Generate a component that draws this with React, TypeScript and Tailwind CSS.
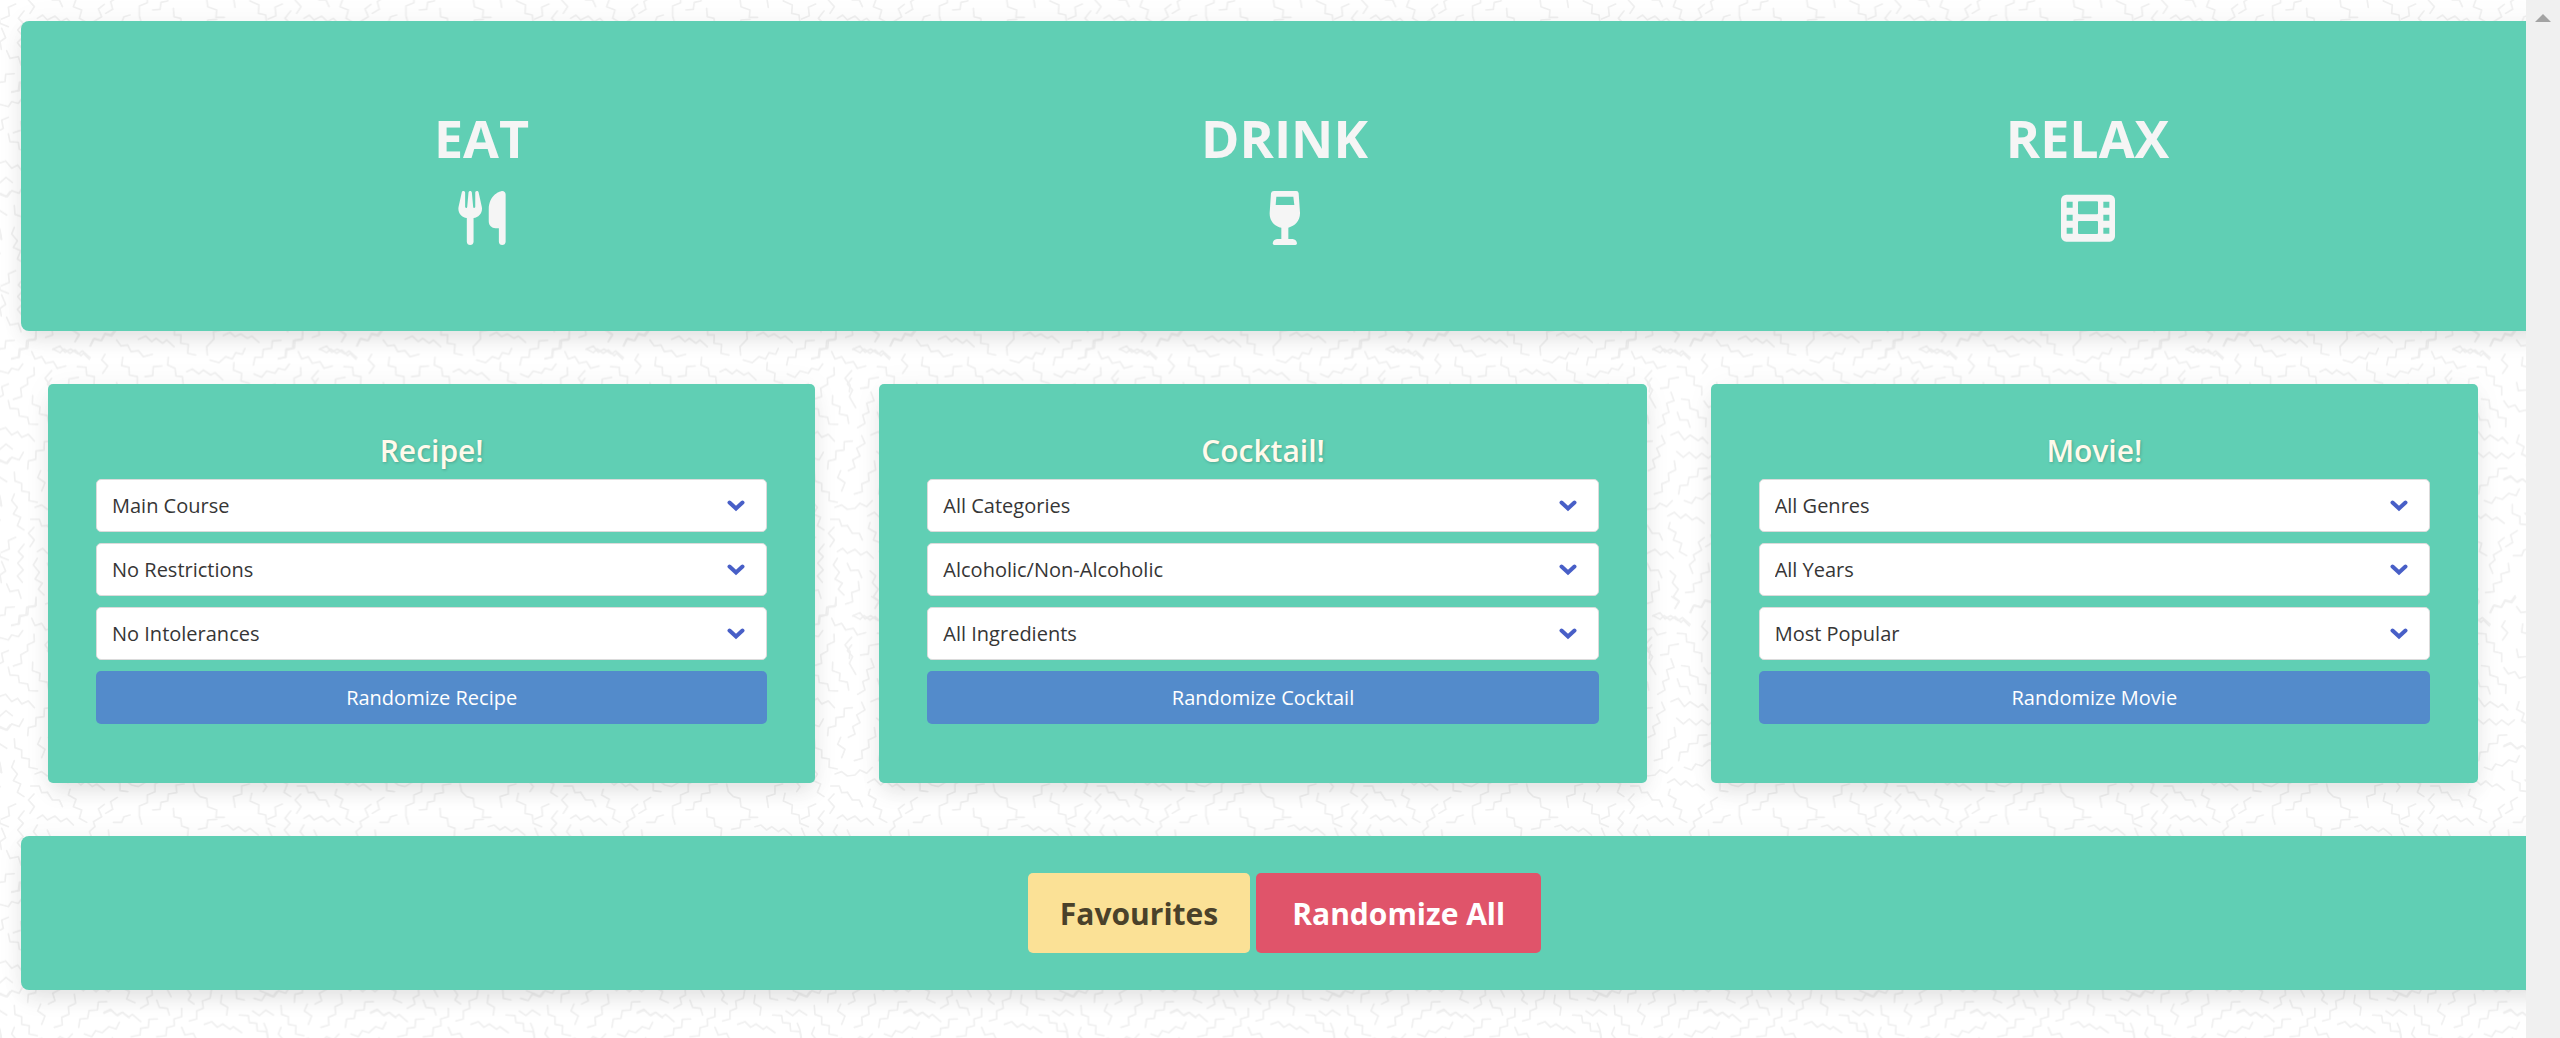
import type { ReactNode } from "react";
import { FaUtensils } from "react-icons/fa6";

// Zigzag strokes of the wallpaper tile (800 x 800 units, drawn at one third).
const LEFT_STROKES = [
  "25,12 5,20 10,45 -8,55",
  "25,62 30,85 55,87 58,108 83,112 87,132 113,133",
  "98,47 97,72 120,80 118,102 142,107 146,130",
  "-22,158 -3,150 17,143 35,165 53,155 65,172 85,163 103,183",
  "157,183 133,185 132,210 108,213 107,238 85,243 83,267",
  "-20,222 0,208 18,192 37,207",
  "-20,232 0,240 22,250 35,232 57,240 70,217",
  "43,277 45,303 65,310 65,333 88,337 87,362 112,367",
  "122,272 113,293 135,308 125,333",
  "43,342 35,362 52,382 40,402 62,412 52,437 72,450",
  "-8,330 0,350 5,378",
  "92,418 118,418 125,438 143,437",
  "102,442 85,460 103,480 90,500",
  "47,472 25,482 28,507 5,517",
  "72,493 55,515 70,530 53,550 70,570 52,588 67,607",
  "112,535 100,555 118,577 105,597 127,610 115,628 132,645",
  "5,545 17,573 0,585 4,608",
  "20,612 30,635 55,630 63,655",
  "108,652 108,677 85,680 83,705 60,710 58,732 35,735",
];

const MIDDLE_STROKES = [
  "93,37 102,62 80,70 87,97 68,105 75,130 53,143",
  "35,-5 22,12 38,30 28,50 47,83",
  "112,97 120,120 143,120 150,142",
  "125,57 147,60 150,85 173,92 175,112 198,115 197,140",
  "93,165 115,155 133,180 150,165 175,182 187,172 203,190",
  "110,215 130,232 148,217 168,235 185,220 205,235 223,220",
  "65,167 75,190 50,205 60,228 38,240 45,262 25,272",
  "103,243 107,270 85,280 87,303 65,312 67,335 43,342",
  "200,265 175,266 172,290 147,292 143,315 120,317 116,342",
  "133,362 155,370 167,352 187,358 207,340 228,347 238,327",
  "-15,382 5,375 22,388 45,385 60,370 80,380 97,362",
  "83,408 103,397 122,415 137,403 157,420 170,412 193,430",
  "90,428 85,445 108,458 100,480 125,490 118,515 140,527",
  "193,473 175,487 185,510 160,525 165,540 148,555 158,580",
  "232,452 212,465 218,488 197,500",
  "22,437 37,460 58,460 67,480",
  "-8,515 8,505 22,520 45,508 62,525 80,515 100,535",
  "22,550 32,572 55,570 65,593",
  "55,605 58,630 35,638 38,665 17,672",
  "205,550 208,575 183,582 185,605 160,612 162,635 137,638",
  "90,573 107,588 97,608 115,628 100,650 117,663 105,685",
  "150,698 160,677 183,682 195,660 213,665 225,648",
  "38,708 60,698 75,717 92,707 115,722 127,713 150,733",
];

const RIGHT_STROKES = [
  "612,303 625,322 645,315 658,335 678,330 692,350",
  "657,405 650,428 672,440 665,463 688,473",
  "612,540 633,530 652,547 668,537 688,553",
  "637,613 637,640 660,650 660,672 683,675",
  "640,767 665,767 672,750 690,745",
];

const UPPER_STROKES = [
  "35,177 55,172 58,147 78,145 80,122 105,120 108,97",
  "160,147 180,158 192,147 210,160 225,150 243,167 250,160 268,178",
  "215,90 238,105 225,125",
  "272,138 283,115 305,122 315,103 335,108 347,92",
  "350,120 363,138 383,135 393,155 415,152 430,170 457,163",
  "415,118 437,108 455,125 468,115 488,130 500,120 522,140",
  "500,80 523,82 523,105 543,105 542,130 565,133 563,160 587,165",
  "663,90 640,95 642,117 620,140 622,165",
  "670,107 690,97 705,110 722,102 742,115 755,108 777,127",
  "735,145 727,163 707,158 697,177 677,170 657,188 630,180",
  "760,195 765,172 787,172 790,148 815,145 817,123 843,121",
  "95,155 105,177 125,170 137,190 160,185 172,205 197,198",
  "315,163 305,180 323,198 308,220",
  "368,172 365,197 387,202 388,225 412,230 412,255",
  "505,172 503,195 525,205 528,228 547,230 550,255",
  "485,198 460,200 458,227 435,230",
  "232,200 258,202 260,226 283,230 282,255 305,260 305,285",
  "235,232 207,237 205,262 182,265",
  "560,215 577,207 597,222 610,210 632,225 645,218 668,240",
  "702,188 700,210 725,220 723,243 748,250",
  "762,222 785,232 800,213 825,220 835,205 855,210 868,192",
  "102,203 103,225 82,235 83,253 62,265 65,290 40,298",
  "155,212 135,235 150,255 148,275",
  "350,248 355,272 378,270",
];

const LOWER_STROKES = [
  "312,277 332,268 350,285 367,277 385,292 397,283 422,305",
  "365,200 388,215 380,237 405,248",
  "455,205 457,225 440,233 445,252 422,265",
  "470,240 478,262 502,265 508,285",
  "500,205 513,230",
  "560,205 573,225 565,240 582,252",
  "635,205 630,235 607,243 610,265 590,273 590,297 568,303",
  "545,265 545,290 522,297 523,317 500,323 498,347 470,350",
  "472,297 447,298 445,322 422,325 420,345 393,350",
  "545,322 555,345 580,340 590,360",
  "613,313 635,305 652,322 668,312 690,328 700,320 725,338",
  "665,225 662,250 683,262 680,285",
  "708,205 710,235 733,240",
  "762,235 785,242 797,222 818,230 830,215",
  "758,273 778,287 797,270 820,285",
  "718,285 745,287 748,308 770,310 772,333 800,335 803,357",
];

const CREST_STROKES = [
  "-5,900 15,915 35,920 60,905",
  "107,900 85,912 85,935 62,945 62,968 38,978 38,1008 45,1032",
  "172,912 148,915 150,938 125,942 123,963 103,967 100,988 78,990",
  "200,912 205,935 220,950 240,955 243,980 270,990 268,1012 293,1012",
  "325,982 320,950 345,942 345,918 368,912",
  "375,940 370,963 397,975 395,1000 417,1005 420,1030 445,1040",
  "405,900 420,920 410,935",
  "140,985 142,1010 162,1015 165,1038 185,1045 183,1068",
  "215,1048 240,1043 243,1020 270,1018",
  "285,1040 303,1035 320,1050 335,1040 355,1055 370,1045 395,1065",
];

function Strokes({ points }: { points: string[] }) {
  return (
    <>
      {points.map((p) => (
        <polyline key={p} points={p} />
      ))}
    </>
  );
}

function Wallpaper() {
  return (
    <svg aria-hidden="true" className="pointer-events-none absolute inset-0 -z-10 size-full">
      <defs>
        <g
          id="zigzags"
          fill="none"
          stroke="#f0f0f0"
          strokeWidth="5"
          strokeLinecap="round"
          strokeLinejoin="round"
        >
          <g transform="translate(0 340)">
            <Strokes points={LEFT_STROKES} />
          </g>
          <g transform="translate(120 340)">
            <Strokes points={MIDDLE_STROKES} />
          </g>
          <g transform="translate(-300 100)">
            <Strokes points={RIGHT_STROKES} />
          </g>
          <g transform="translate(0 100)">
            <Strokes points={UPPER_STROKES} />
          </g>
          <g transform="translate(0 360)">
            <Strokes points={LOWER_STROKES} />
          </g>
          <g transform="translate(380 -160)">
            <Strokes points={CREST_STROKES} />
          </g>
        </g>
        <pattern
          id="zigzag-tile"
          width="800"
          height="800"
          patternUnits="userSpaceOnUse"
          patternTransform="scale(0.33333)"
        >
          <use href="#zigzags" />
          <use href="#zigzags" x="-800" />
          <use href="#zigzags" x="800" />
          <use href="#zigzags" y="-800" />
          <use href="#zigzags" x="-800" y="-800" />
        </pattern>
      </defs>
      <rect width="100%" height="100%" fill="url(#zigzag-tile)" />
    </svg>
  );
}

function WineGlassIcon() {
  return (
    <svg aria-hidden="true" viewBox="0 0 162 162" className="size-[54px] fill-current" fillRule="evenodd">
      <path d="M48 0H115Q121 0 122 7L126 65C127 89 111 106 91 110V144H104Q115 145 117 157Q117 162 112 162H49Q44 162 44 157Q46 145 57 144H70V110C48 105 34 89 35 65L39 7Q40 0 48 0ZM55 17 53 42H109L106 17Z" />
    </svg>
  );
}

function FilmIcon() {
  return (
    <svg aria-hidden="true" viewBox="0 0 162 162" className="size-[54px] fill-current" fillRule="evenodd">
      <path d="M16 11H146A16 16 0 0 1 162 27V136A16 16 0 0 1 146 152H16A16 16 0 0 1 0 136V27A16 16 0 0 1 16 11ZM17 32V50H35V32ZM17 71V89H35V71ZM17 110V128H35V110ZM127 32V50H145V32ZM127 71V89H145V71ZM127 110V128H145V110ZM54 31Q51 31 51 34V67Q51 70 54 70H108Q111 70 111 67V34Q111 31 108 31ZM54 90Q51 90 51 93V126Q51 129 54 129H108Q111 129 111 126V93Q111 90 108 90Z" />
    </svg>
  );
}

function HeroColumn({ title, icon }: { title: string; icon: ReactNode }) {
  return (
    <div className="flex flex-1 flex-col items-center">
      <h1 className="text-[52px] leading-[58px] font-bold">{title}</h1>
      <div className="mt-6 text-[54px]">{icon}</div>
    </div>
  );
}

function SelectField({ label, value }: { label: string; value: string }) {
  return (
    <div className="relative">
      <select
        aria-label={label}
        className="block h-[53px] w-full appearance-none rounded-[5px] border border-[#dbdbdb] bg-white pr-14 pl-[15px] text-[20px] text-[#363636]"
      >
        <option>{value}</option>
      </select>
      <svg
        aria-hidden="true"
        viewBox="0 0 18 12"
        className="pointer-events-none absolute top-[21px] right-[22px] h-3 w-[18px] fill-none stroke-[#485fc7]"
        strokeWidth="4"
        strokeLinecap="round"
        strokeLinejoin="miter"
      >
        <path d="M2.5 2.5 9 8.5 15.5 2.5" />
      </svg>
    </div>
  );
}

type Picker = { title: string; fields: [string, string][]; action: string };

const PICKERS: Picker[] = [
  {
    title: "Recipe!",
    fields: [
      ["Course", "Main Course"],
      ["Diet", "No Restrictions"],
      ["Intolerances", "No Intolerances"],
    ],
    action: "Randomize Recipe",
  },
  {
    title: "Cocktail!",
    fields: [
      ["Category", "All Categories"],
      ["Alcohol", "Alcoholic/Non-Alcoholic"],
      ["Ingredient", "All Ingredients"],
    ],
    action: "Randomize Cocktail",
  },
  {
    title: "Movie!",
    fields: [
      ["Genre", "All Genres"],
      ["Year", "All Years"],
      ["Sort by", "Most Popular"],
    ],
    action: "Randomize Movie",
  },
];

function PickerCard({ title, fields, action }: Picker) {
  return (
    <section className="flex flex-1 flex-col rounded-[5px] bg-[#60cfb4] px-12 pt-12 pb-[59px] shadow-[0_11px_21px_-3px_rgba(10,10,10,0.1),0_0_32px_rgba(10,10,10,0.04)]">
      <h2 className="mb-[9px] text-center text-[30px] leading-[38px] font-semibold text-[#fffaeb] [text-shadow:1px_1px_3px_rgba(0,0,0,0.2)]">
        {title}
      </h2>
      <div className="flex flex-col gap-[11px]">
        {fields.map(([label, value]) => (
          <SelectField key={label} label={label} value={value} />
        ))}
        <button type="button" className="h-[53px] rounded-[5px] bg-[#538bcb] text-[20px] text-white">
          {action}
        </button>
      </div>
    </section>
  );
}

export default function App() {
  return (
    <div className="flex min-h-screen bg-white font-['Open_Sans','Noto_Sans',sans-serif]">
      <main className="relative isolate min-w-0 flex-1 overflow-hidden pt-[21px] pl-[21px]">
        <Wallpaper />
        <header className="-mr-[22px] flex rounded-lg bg-[#60cfb4] px-[59px] pt-[88px] pb-[86px] text-[#f5f5f5] shadow-[0_11px_21px_-3px_rgba(10,10,10,0.1),0_0_32px_rgba(10,10,10,0.04)]">
          <HeroColumn title="EAT" icon={<FaUtensils />} />
          <HeroColumn title="DRINK" icon={<WineGlassIcon />} />
          <HeroColumn title="RELAX" icon={<FilmIcon />} />
        </header>
        <div className="flex gap-16 py-[53px] pr-12 pl-[27px]">
          {PICKERS.map((picker) => (
            <PickerCard key={picker.title} {...picker} />
          ))}
        </div>
        <footer className="-mr-[22px] flex justify-center gap-[6px] rounded-lg bg-[#60cfb4] py-[37px] text-[30px] font-bold shadow-[0_11px_21px_-3px_rgba(10,10,10,0.1),0_0_32px_rgba(10,10,10,0.04)]">
          <button type="button" className="h-20 rounded-[5px] bg-[#fbe196] px-8 text-[#4a412a]">
            Favourites
          </button>
          <button type="button" className="h-20 rounded-[5px] bg-[#e0546a] px-9 text-white">
            Randomize All
          </button>
        </footer>
      </main>
      <div aria-hidden="true" className="flex w-[34px] shrink-0 justify-center bg-[#f0f0f0] pt-[14px]">
        <svg viewBox="0 0 16 8" className="h-2 w-4 fill-[#a3a3a3]">
          <path d="M8 0 16 8H0Z" />
        </svg>
      </div>
    </div>
  );
}
